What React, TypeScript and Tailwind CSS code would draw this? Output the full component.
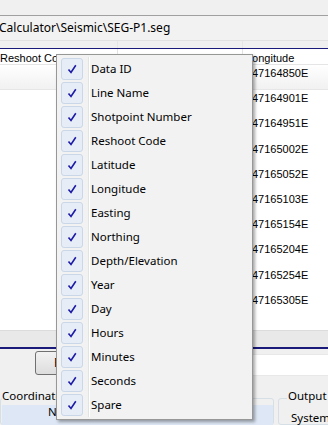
import React from 'react';

const items = [
  'Data ID',
  'Line Name',
  'Shotpoint Number',
  'Reshoot Code',
  'Latitude',
  'Longitude',
  'Easting',
  'Northing',
  'Depth/Elevation',
  'Year',
  'Day',
  'Hours',
  'Minutes',
  'Seconds',
  'Spare',
];

const rows = [
  '47164850E',
  '47164901E',
  '47164951E',
  '47165002E',
  '47165052E',
  '47165103E',
  '47165154E',
  '47165204E',
  '47165254E',
  '47165305E',
];

const ui = { fontFamily: '"Noto Sans", "Open Sans", sans-serif' };
const sans = { fontFamily: '"Liberation Sans", Arial, sans-serif' };

const Check = () => (
  <svg width="10" height="10" viewBox="0 0 10 10">
    <path d="M1.5 5.5 L4 8.5 L8.8 1.2" fill="none" stroke="#1b1ba6" strokeWidth="1.6" />
  </svg>
);

const App: React.FC = () => {
  return (
    <div className="relative w-[328px] h-[425px] overflow-hidden bg-[#f0f0f0] text-black" style={ui}>
      {/* top strip */}
      <div className="h-[16px] border-b border-[#a0a0a0]" />
      <div className="h-[25px] flex items-center text-[12px] border-b border-[#e2e2e2] bg-[#f2f2f2]">
        <span className="-ml-[1px]">Calculator\Seismic\SEG-P1.seg</span>
      </div>
      <div className="h-[8px] flex border-b border-[#1a1a7a]">
        <div className="w-[118px] border-r border-[#e6e6e6]" />
        <div className="w-[125px] border-r border-[#e6e6e6]" />
      </div>

      {/* grid */}
      <div className="h-[16px] flex items-end text-[11px] leading-[11px] bg-white border-b border-[#e5e5e5]" style={sans}>
        <div className="w-[118px] h-full flex items-end border-r border-[#e3e3e3] overflow-hidden whitespace-nowrap">Reshoot Code</div>
        <div className="w-[125px] h-full border-r border-[#e3e3e3]" />
        <div className="flex-1 pl-[3px] overflow-hidden whitespace-nowrap">Longitude</div>
      </div>
      <div className="h-[265px] bg-white flex flex-col" style={sans}>
        {rows.map((r, i) => (
          <div
            key={r}
            className={`h-[25.2px] shrink-0 pt-[2px] text-[11px] leading-[13px] pl-[252px] ${i === 0 ? 'bg-gradient-to-b from-white to-[#f1f1f1] border-b border-[#e6e6e6]' : ''}`}
          >
            {r}
          </div>
        ))}
      </div>
      <div className="h-[19px] bg-[#e9e9e9] border-t border-[#dcdcdc] border-b-2 border-b-[#1a1a7a]" />

      {/* bottom panel */}
      <div className="h-[44px] flex items-start pt-[2px]">
        <div className="ml-[35px] w-[70px] h-[24px] rounded-[3px] border border-[#707070] bg-gradient-to-b from-[#f2f2f2] to-[#dddddd] text-[12px] flex items-center pl-[18px]">
          F
        </div>
        <div className="ml-auto mt-[3px] w-[80px] h-[22px] bg-white border-y border-[#e8e8e8]" />
      </div>
      <div className="flex h-[32px]">
        <div className="relative w-[279px] border border-[#d5dfe5] rounded-[3px] mt-[5px]">
          <span className="absolute -top-[11px] left-[1px] bg-[#f0f0f0] text-[11.5px] leading-[16px] pr-[2px]">Coordinate Systems</span>
          <div className="mt-[6px] ml-[1px] w-[271px] h-[30px] bg-[#dde7f5] text-[11.5px] leading-[13px] flex">
            <span className="ml-[46px]">Name</span>
          </div>
        </div>
        <div className="relative flex-1 ml-[4px] border border-[#d5dfe5] rounded-[3px] mt-[5px]">
          <span className="absolute -top-[11px] left-[8px] bg-[#f0f0f0] text-[11.5px] leading-[16px] px-[1px] whitespace-nowrap">Output Coordinates</span>
          <div className="text-[11.5px] mt-[10px] ml-[12px] whitespace-nowrap">System</div>
        </div>
      </div>

      {/* context menu */}
      <div className="absolute left-[56px] top-[54px] w-[197px] bg-[#f2f2f2] border border-[#979797] py-[2px] shadow-[2px_2px_3px_rgba(0,0,0,0.35)]">
        <div className="absolute left-[31px] top-[2px] bottom-[2px] w-[2px] border-l border-[#e2e3e3] bg-white" />
        {items.map((t) => (
          <div key={t} className="relative h-[24px] flex items-center text-[11.5px]">
            <div className="ml-[4px] w-[22px] h-[22px] rounded-[3px] border border-[#c9d7e9] bg-[#e6edf7] flex items-center justify-center">
              <Check />
            </div>
            <span className="ml-[8px] whitespace-nowrap">{t}</span>
          </div>
        ))}
      </div>
    </div>
  );
};

export default App;
